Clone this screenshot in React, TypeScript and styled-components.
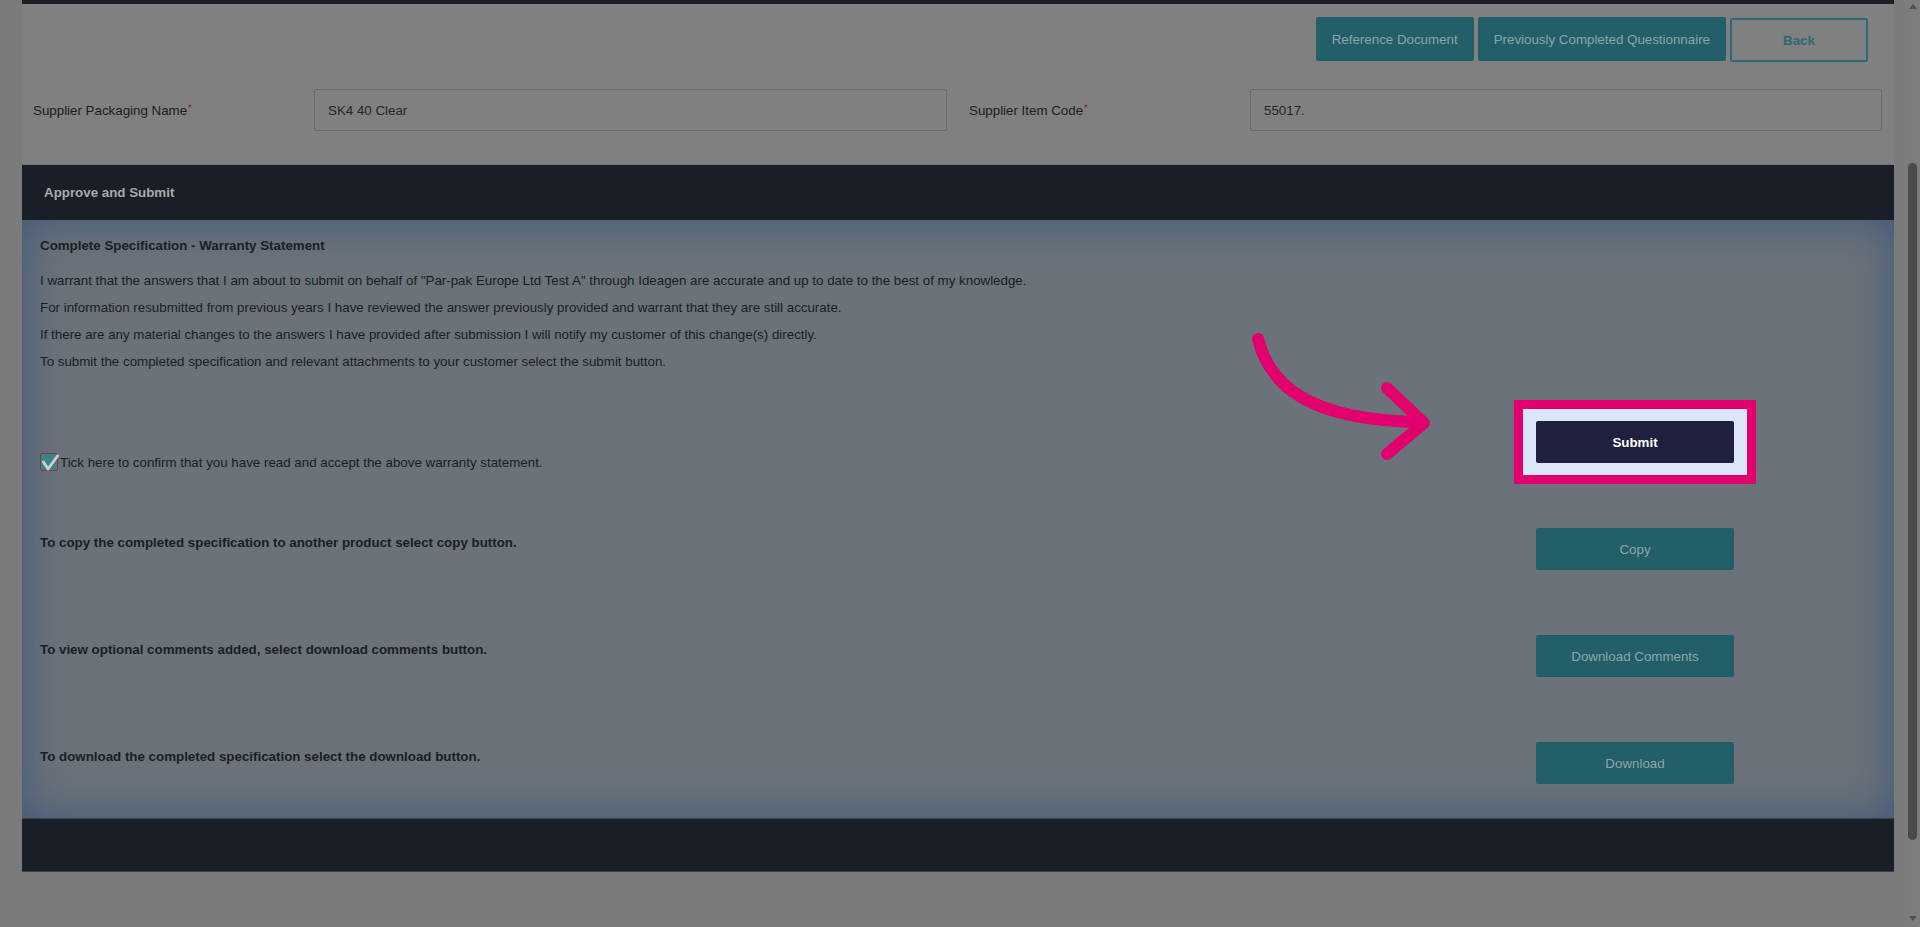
import React from 'react';
import styled, { createGlobalStyle } from 'styled-components';

const GlobalStyle = createGlobalStyle`
  html, body {
    margin: 0;
    height: 100%;
  }
  body {
    background: #7b7b7b;
    font-family: "Liberation Sans", Arial, sans-serif;
    font-size: 13.33px;
    overflow: hidden;
  }
  * {
    box-sizing: border-box;
  }
`

const Shell = styled.div`
  display: flex;
  height: 100vh;
`

const Page = styled.div`
  flex: 1;
  padding: 0 11px 0 22px;
`

const TopStrip = styled.div`
  height: 4px;
  background: #1a1f27;
`

const TopArea = styled.div`
  background: #808080;
  padding: 13px 0 33px;
  border-bottom: 1px solid #727272;
`

const Toolbar = styled.div`
  display: flex;
  justify-content: flex-end;
  gap: 4px;
  padding-right: 26px;
  margin-bottom: 27px;
`

const ToolButton = styled.button<{ $outline?: boolean }>`
  height: 44px;
  padding: 0 16px;
  border-radius: 2px;
  font-family: inherit;
  font-size: 13.33px;
  cursor: pointer;
  background: ${p => (p.$outline ? '#808080' : '#225f69')};
  color: ${p => (p.$outline ? '#2b6a74' : '#8fa4a7')};
  border: ${p => (p.$outline ? '2px solid #2a6b75' : 'none')};
  font-weight: ${p => (p.$outline ? 'bold' : 'normal')};
  min-width: ${p => (p.$outline ? '138px' : '0')};
  margin-top: ${p => (p.$outline ? '1px' : '0')};
`

const Fields = styled.div`
  display: grid;
  grid-template-columns: 1fr 1fr;
`

const Field = styled.div<{ $last?: boolean }>`
  display: grid;
  grid-template-columns: 281px 1fr;
  align-items: center;
  padding: ${p => (p.$last ? '0 12px 0 11px' : '0 11px')};
`

const Label = styled.label`
  color: #1c1c1c;
`

const Required = styled.span`
  color: #8c2b2b;
  font-size: 10px;
  vertical-align: top;
  margin-left: 1px;
`

const TextInput = styled.input`
  height: 42px;
  width: 100%;
  border: 1px solid #6a6a6a;
  border-radius: 2px;
  background: #808080;
  padding: 0 13px;
  font-family: inherit;
  font-size: 13.33px;
  color: #262626;
  outline: none;
`

const SectionHeader = styled.div`
  height: 55px;
  display: flex;
  align-items: center;
  padding-left: 22px;
  background: #1a1f27;
  color: #a7aaae;
  font-weight: bold;
`

const Panel = styled.div`
  position: relative;
  height: 598px;
  padding: 17px 160px 0 18px;
  background: #6b727a;
  box-shadow: inset 0 0 40px 2px rgba(55, 84, 122, 0.8);
  color: #1a1e24;
`

const Title = styled.h4`
  margin: 0 0 13px;
  font-size: 13.33px;
  line-height: 17px;
  font-weight: bold;
`

const Para = styled.p`
  margin: 0;
  line-height: 27px;
`

const ActionList = styled.div`
  display: flex;
  flex-direction: column;
  gap: 65px;
  margin-top: 46px;
`

const ActionRow = styled.div`
  display: grid;
  grid-template-columns: 1fr 198px;
  align-items: start;
  height: 42px;
`

const ActionText = styled.div<{ $offset: number; $bold?: boolean }>`
  padding-top: ${p => p.$offset}px;
  line-height: 17px;
  font-weight: ${p => (p.$bold ? 'bold' : 'normal')};
  display: flex;
  align-items: center;
  gap: 2px;
`

const CheckBox = styled.span`
  width: 18px;
  height: 18px;
  flex: none;
  border: 1px solid #9a2f3c;
  border-radius: 2px;
  background: #37848d;
  display: inline-flex;
`

const ActionButton = styled.button`
  width: 198px;
  height: 42px;
  border: none;
  border-radius: 2px;
  background: #225f69;
  color: #8fa4a7;
  font-family: inherit;
  font-size: 13.33px;
  cursor: pointer;
`

const SubmitFrame = styled.div`
  margin: -21px -22px;
  padding: 12px 13px;
  border: 9px solid #e2006f;
  background: #dbe7f6;
`

const SubmitButton = styled.button`
  display: block;
  width: 100%;
  height: 42px;
  border: none;
  border-radius: 2px;
  background: #1f1f3e;
  color: #ffffff;
  font-family: inherit;
  font-size: 13.33px;
  font-weight: bold;
  cursor: pointer;
`

const Pointer = styled.svg`
  position: absolute;
  left: 1218px;
  top: 106px;
  pointer-events: none;
`

const Footer = styled.div`
  height: 54px;
  background: #1a1f27;
  border-top: 1px solid #3b4350;
  border-bottom: 1px solid #3b4350;
`

const Scrollbar = styled.div`
  width: 15px;
  display: flex;
  flex-direction: column;
  align-items: center;
  background: #7d7d7d;
`

const ArrowUp = styled.span`
  margin-top: 4px;
  width: 0;
  height: 0;
  border-left: 4px solid transparent;
  border-right: 4px solid transparent;
  border-bottom: 5px solid #505050;
`

const ArrowDown = styled.span`
  margin: auto 0 6px;
  width: 0;
  height: 0;
  border-left: 4px solid transparent;
  border-right: 4px solid transparent;
  border-top: 5px solid #505050;
`

const Thumb = styled.div`
  width: 9px;
  height: 677px;
  margin-top: 154px;
  border-radius: 5px;
  background: #4a4a4a;
`

const actions = [
  { text: 'To copy the completed specification to another product select copy button.', label: 'Copy' },
  { text: 'To view optional comments added, select download comments button.', label: 'Download Comments' },
  { text: 'To download the completed specification select the download button.', label: 'Download' },
]

function App() {
  return (
    <Shell>
      <GlobalStyle />
      <Page>
        <TopStrip />
        <TopArea>
          <Toolbar>
            <ToolButton>Reference Document</ToolButton>
            <ToolButton>Previously Completed Questionnaire</ToolButton>
            <ToolButton $outline>Back</ToolButton>
          </Toolbar>
          <Fields>
            <Field>
              <Label>Supplier Packaging Name<Required>*</Required></Label>
              <TextInput readOnly value="SK4 40 Clear" />
            </Field>
            <Field $last>
              <Label>Supplier Item Code<Required>*</Required></Label>
              <TextInput readOnly value="55017." />
            </Field>
          </Fields>
        </TopArea>

        <SectionHeader>Approve and Submit</SectionHeader>
        <Panel>
          <Title>Complete Specification - Warranty Statement</Title>
          <Para>I warrant that the answers that I am about to submit on behalf of "Par-pak Europe Ltd Test A" through Ideagen are accurate and up to date to the best of my knowledge.</Para>
          <Para>For information resubmitted from previous years I have reviewed the answer previously provided and warrant that they are still accurate.</Para>
          <Para>If there are any material changes to the answers I have provided after submission I will notify my customer of this change(s) directly.</Para>
          <Para>To submit the completed specification and relevant attachments to your customer select the submit button.</Para>

          <ActionList>
            <ActionRow>
              <ActionText $offset={32}>
                <CheckBox>
                  <svg width="18" height="18" viewBox="0 0 18 18" style={{ overflow: 'visible' }}>
                    <path d="M2.5 8 L7 15 L16.5 2" fill="none" stroke="#c9d3d5" strokeWidth="2.8" strokeLinecap="round" strokeLinejoin="round" />
                  </svg>
                </CheckBox>
                Tick here to confirm that you have read and accept the above warranty statement.
              </ActionText>
              <SubmitFrame>
                <SubmitButton>Submit</SubmitButton>
              </SubmitFrame>
            </ActionRow>
            {actions.map(a => (
              <ActionRow key={a.label}>
                <ActionText $offset={6} $bold>{a.text}</ActionText>
                <ActionButton>{a.label}</ActionButton>
              </ActionRow>
            ))}
          </ActionList>

          <Pointer width="200" height="145" viewBox="0 0 200 145">
            <path d="M18 13 C30 60, 70 95, 182 96" fill="none" stroke="#e2006f" strokeWidth="12" strokeLinecap="round" />
            <path d="M147 62 L184 97 L147 128" fill="none" stroke="#e2006f" strokeWidth="12" strokeLinecap="round" strokeLinejoin="round" />
          </Pointer>
        </Panel>
        <Footer />
      </Page>
      <Scrollbar>
        <ArrowUp />
        <Thumb />
        <ArrowDown />
      </Scrollbar>
    </Shell>
  );
}

export default App;
